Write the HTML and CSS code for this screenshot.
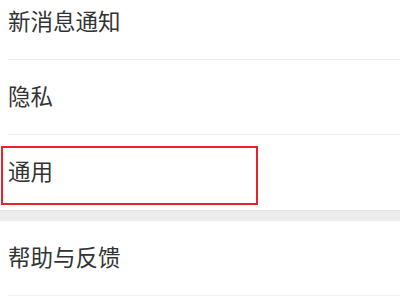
FILE: index.html
```html
<!DOCTYPE html>
<html lang="zh-CN">
<head>
    <meta charset="UTF-8">
    <meta name="viewport" content="width=device-width, initial-scale=1.0">
    <title>设置</title>
    <link rel="stylesheet" href="styles.css">
</head>
<body>
    <div class="settings">
        <div class="group">
            <div class="item">新消息通知</div>
            <div class="item">隐私</div>
            <div class="item last">
                通用
                <div class="highlight"></div>
            </div>
        </div>

        <div class="gap"></div>

        <div class="group">
            <div class="item">帮助与反馈</div>
        </div>
    </div>
</body>
</html>
```

FILE: styles.css
```css
* {
    box-sizing: border-box;
    margin: 0;
    padding: 0;
    font-family: "Noto Sans CJK SC", "Noto Sans", sans-serif;
}

body {
    background-color: #fff;
    width: 400px;
    height: 300px;
    overflow: hidden;
}

.settings {
    margin-top: -15px;
}

.item {
    position: relative;
    height: 75px;
    padding-left: 8px;
    padding-bottom: 5px;
    display: flex;
    align-items: center;
    font-size: 22.5px;
    color: #333;
    background: #fff;
}

.item::after {
    content: "";
    position: absolute;
    left: 8px;
    right: 0;
    bottom: 0;
    height: 1px;
    background-color: #efefef;
}

.item.last::after {
    display: none;
}

.highlight {
    position: absolute;
    top: 11px;
    left: 1px;
    width: 257px;
    height: 59px;
    border: 2px solid #e8232e;
}

.gap {
    height: 11px;
    background-color: #ececec;
    border-top: 1px solid #e4e4e4;
}
```
